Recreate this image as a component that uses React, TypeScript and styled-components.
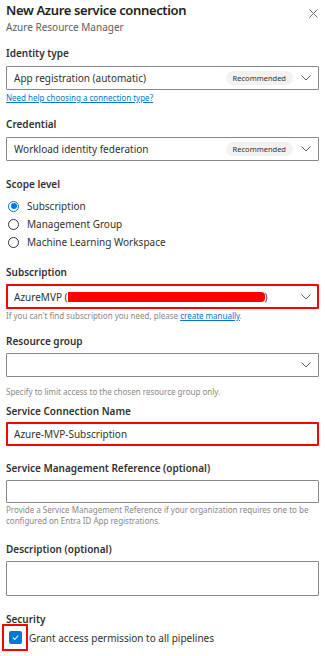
import React from 'react'
import styled, { createGlobalStyle } from 'styled-components'

const GlobalStyle = createGlobalStyle`
  html, body {
    margin: 0;
    padding: 0;
    background: #ffffff;
  }
  body {
    font-family: 'Noto Sans', 'Open Sans', sans-serif;
    color: #323130;
  }
`

const colors = {
  text: '#323130',
  title: '#201f1e',
  muted: '#605e5c',
  hint: '#8a8886',
  border: '#8a8886',
  blue: '#0078d4',
  red: '#ff0000',
  pill: '#f3f2f1',
}

function Chevron(): JSX.Element {
  return (
    <ChevronSvg viewBox="0 0 10 6" width="10" height="6">
      <path d="M0.5 0.5 L5 5 L9.5 0.5" fill="none" stroke="#605e5c" strokeWidth="1" />
    </ChevronSvg>
  )
}

interface DropdownProps {
  value?: string
  badge?: string
  $highlight?: boolean
  $height?: number
  children?: React.ReactNode
}

function Dropdown(props: DropdownProps): JSX.Element {
  const { value, badge, $highlight, $height, children } = props
  return (
    <Box $highlight={$highlight} $height={$height}>
      <BoxText>{children ?? value}</BoxText>
      {badge && <Pill>{badge}</Pill>}
      <Chevron />
    </Box>
  )
}

export default function App(): JSX.Element {
  return (
    <>
      <GlobalStyle />
      <Panel>
        <Header>
          <Title>New Azure service connection</Title>
          <Close viewBox="0 0 10 10" width="9" height="9">
            <path d="M0.5 0.5 L9.5 9.5 M9.5 0.5 L0.5 9.5" stroke="#605e5c" strokeWidth="1" />
          </Close>
        </Header>
        <Subtitle>Azure Resource Manager</Subtitle>

        <Label $mt={12}>Identity type</Label>
        <Dropdown value="App registration (automatic)" badge="Recommended" />
        <Link $mt={2}>Need help choosing a connection type?</Link>

        <Label $mt={14}>Credential</Label>
        <Dropdown value="Workload identity federation" badge="Recommended" />

        <Label $mt={16}>Scope level</Label>
        <RadioGroup>
          <RadioRow>
            <Radio $checked />
            Subscription
          </RadioRow>
          <RadioRow>
            <Radio />
            Management Group
          </RadioRow>
          <RadioRow>
            <Radio />
            Machine Learning Workspace
          </RadioRow>
        </RadioGroup>

        <Label $mt={14} $gap={5}>Subscription</Label>
        <Dropdown $highlight $height={25}>
          AzureMVP (<Redacted />)
        </Dropdown>
        <Hint $mt={1}>
          If you can't find subscription you need, please <HintLink>create manually</HintLink>.
        </Hint>

        <Label $mt={13} $gap={5}>Resource group</Label>
        <Dropdown $height={24} />
        <Hint $mt={9}>Specify to limit access to the chosen resource group only.</Hint>

        <Label $mt={7} $gap={4}>Service Connection Name</Label>
        <Box $highlight $height={24}>
          <BoxText>Azure-MVP-Subscription</BoxText>
        </Box>

        <Label $mt={15} $gap={5}>Service Management Reference (optional)</Label>
        <Box $height={23} />
        <Hint $mt={1}>
          Provide a Service Management Reference if your organization requires one to be
          configured on Entra ID App registrations.
        </Hint>

        <Label $mt={16} $gap={5}>Description (optional)</Label>
        <Box $height={35} />

        <Label $mt={16} $gap={-2}>Security</Label>
        <CheckRow>
          <CheckFrame>
            <Checkbox>
              <svg viewBox="0 0 10 10" width="9" height="9">
                <path d="M2 5.2 L4.2 7.2 L8 2.8" fill="none" stroke="#ffffff" strokeWidth="1.2" />
              </svg>
            </Checkbox>
          </CheckFrame>
          Grant access permission to all pipelines
        </CheckRow>
      </Panel>
    </>
  )
}

const Panel = styled.div`
  width: 325px;
  box-sizing: border-box;
  padding: 0 6px 0 6px;
  display: flex;
  flex-direction: column;
`

const Header = styled.div`
  display: flex;
  align-items: center;
  justify-content: space-between;
  height: 20px;
`

const Title = styled.div`
  font-size: 13px;
  font-weight: 600;
  line-height: 20px;
  color: ${colors.title};
  letter-spacing: -0.35px;
`

const Close = styled.svg`
  margin-right: 1px;
  margin-top: 7px;
`

const Subtitle = styled.div`
  font-size: 10px;
  line-height: 14px;
  color: ${colors.muted};
`

const Label = styled.div<{ $mt?: number; $gap?: number }>`
  font-size: 10px;
  font-weight: 600;
  line-height: 14px;
  color: ${colors.text};
  margin-top: ${(p) => p.$mt ?? 0}px;
  margin-bottom: ${(p) => p.$gap ?? 6}px;
`

const Box = styled.div<{ $highlight?: boolean; $height?: number }>`
  box-sizing: border-box;
  height: ${(p) => p.$height ?? 24}px;
  border: ${(p) => (p.$highlight ? `2px solid ${colors.red}` : `1px solid ${colors.border}`)};
  border-radius: 1px;
  display: flex;
  align-items: center;
  padding: 0 ${(p) => (p.$highlight ? 6 : 7)}px 0 ${(p) => (p.$highlight ? 6 : 7)}px;
  gap: 6px;
`

const BoxText = styled.div`
  flex: 1;
  display: flex;
  align-items: center;
  font-size: 10px;
  line-height: 14px;
  color: ${colors.text};
  white-space: nowrap;
  overflow: hidden;
`

const Redacted = styled.span`
  display: inline-block;
  width: 197px;
  height: 10px;
  background: ${colors.red};
  border-radius: 0 4px 4px 0;
`

const Pill = styled.span`
  background: ${colors.pill};
  color: ${colors.text};
  font-size: 7.5px;
  line-height: 14px;
  height: 14px;
  padding: 0 7px;
  border-radius: 7px;
`

const ChevronSvg = styled.svg`
  flex: none;
  margin: 0 0 0 2px;
`

const Link = styled.div<{ $mt?: number }>`
  margin-top: ${(p) => p.$mt ?? 0}px;
  font-size: 8px;
  line-height: 11px;
  color: ${colors.blue};
  text-decoration: underline;
`

const RadioGroup = styled.div`
  display: flex;
  flex-direction: column;
`

const RadioRow = styled.div`
  display: flex;
  align-items: center;
  gap: 8px;
  height: 18px;
  padding-left: 2px;
  font-size: 10px;
  color: ${colors.text};
`

const Radio = styled.span<{ $checked?: boolean }>`
  box-sizing: border-box;
  width: 11px;
  height: 11px;
  border-radius: 50%;
  border: 1px solid ${(p) => (p.$checked ? colors.blue : colors.text)};
  display: flex;
  align-items: center;
  justify-content: center;

  &::after {
    content: '';
    display: ${(p) => (p.$checked ? 'block' : 'none')};
    width: 6px;
    height: 6px;
    border-radius: 50%;
    background: ${colors.blue};
  }
`

const Hint = styled.div<{ $mt?: number }>`
  margin-top: ${(p) => p.$mt ?? 0}px;
  font-size: 8px;
  line-height: 11px;
  color: ${colors.hint};
`

const HintLink = styled.span`
  color: ${colors.blue};
  text-decoration: underline;
`

const CheckRow = styled.div`
  display: flex;
  align-items: center;
  gap: 1px;
  font-size: 10px;
  color: ${colors.text};
  margin-left: -4px;
`

const CheckFrame = styled.div`
  box-sizing: border-box;
  width: 26px;
  height: 27px;
  border: 2px solid ${colors.red};
  display: flex;
  align-items: center;
  justify-content: center;
`

const Checkbox = styled.span`
  width: 13px;
  height: 13px;
  border-radius: 2px;
  background: ${colors.blue};
  display: flex;
  align-items: center;
  justify-content: center;
`
